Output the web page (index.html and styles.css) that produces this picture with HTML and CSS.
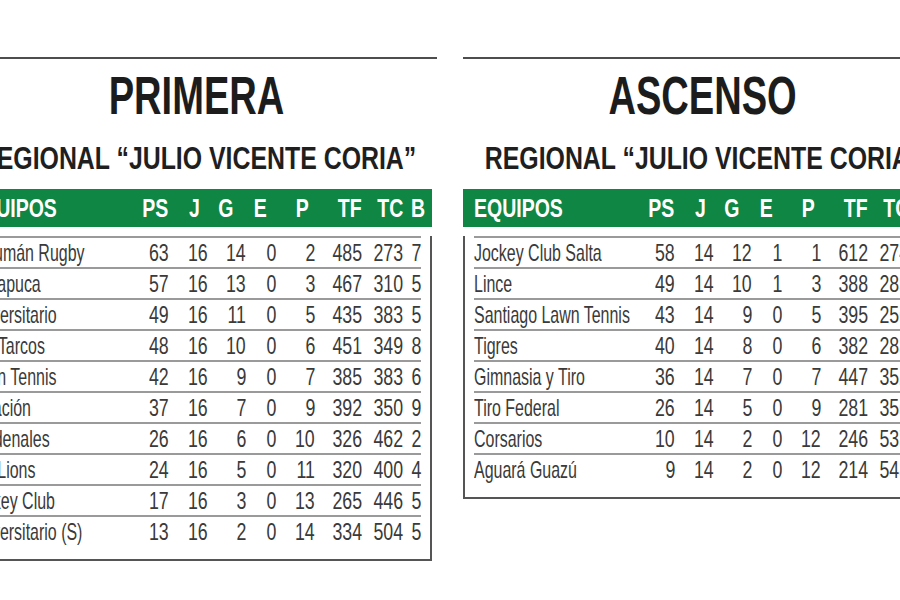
FILE: index.html
```html
<!DOCTYPE html>
<html lang="es">
<head>
<meta charset="utf-8">
<title>Posiciones</title>
<link rel="stylesheet" href="styles.css">
</head>
<body>
<div class="page">
  <section class="panel">
    <div class="rule"></div>
    <h1 class="title"><span>PRIMERA</span></h1>
    <h2 class="sub"><span>REGIONAL “JULIO VICENTE CORIA”</span></h2>
    <div class="thead">
      <span class="h-team"><b>EQUIPOS</b></span><span class="h-ps"><b>PS</b></span><span class="h-j"><b>J</b></span><span class="h-g"><b>G</b></span><span class="h-e"><b>E</b></span><span class="h-p"><b>P</b></span><span class="h-tf"><b>TF</b></span><span class="h-tc"><b>TC</b></span><span class="h-b"><b>B</b></span>
    </div>
    <div class="box">
      <div class="row"><span class="team"><i>Tucumán Rugby</i></span><span><i>63</i></span><span><i>16</i></span><span><i>14</i></span><span><i>0</i></span><span><i>2</i></span><span><i>485</i></span><span><i>273</i></span><span><i>7</i></span></div>
      <div class="row"><span class="team"><i>Huirapuca</i></span><span><i>57</i></span><span><i>16</i></span><span><i>13</i></span><span><i>0</i></span><span><i>3</i></span><span><i>467</i></span><span><i>310</i></span><span><i>5</i></span></div>
      <div class="row"><span class="team"><i>Universitario</i></span><span><i>49</i></span><span><i>16</i></span><span><i>11</i></span><span><i>0</i></span><span><i>5</i></span><span><i>435</i></span><span><i>383</i></span><span><i>5</i></span></div>
      <div class="row"><span class="team"><i>Los Tarcos</i></span><span><i>48</i></span><span><i>16</i></span><span><i>10</i></span><span><i>0</i></span><span><i>6</i></span><span><i>451</i></span><span><i>349</i></span><span><i>8</i></span></div>
      <div class="row"><span class="team"><i>Lawn Tennis</i></span><span><i>42</i></span><span><i>16</i></span><span><i>9</i></span><span><i>0</i></span><span><i>7</i></span><span><i>385</i></span><span><i>383</i></span><span><i>6</i></span></div>
      <div class="row"><span class="team"><i>Natación</i></span><span><i>37</i></span><span><i>16</i></span><span><i>7</i></span><span><i>0</i></span><span><i>9</i></span><span><i>392</i></span><span><i>350</i></span><span><i>9</i></span></div>
      <div class="row"><span class="team"><i>Cardenales</i></span><span><i>26</i></span><span><i>16</i></span><span><i>6</i></span><span><i>0</i></span><span><i>10</i></span><span><i>326</i></span><span><i>462</i></span><span><i>2</i></span></div>
      <div class="row"><span class="team"><i>Old Lions</i></span><span><i>24</i></span><span><i>16</i></span><span><i>5</i></span><span><i>0</i></span><span><i>11</i></span><span><i>320</i></span><span><i>400</i></span><span><i>4</i></span></div>
      <div class="row"><span class="team"><i>Jockey Club</i></span><span><i>17</i></span><span><i>16</i></span><span><i>3</i></span><span><i>0</i></span><span><i>13</i></span><span><i>265</i></span><span><i>446</i></span><span><i>5</i></span></div>
      <div class="row"><span class="team"><i>Universitario (S)</i></span><span><i>13</i></span><span><i>16</i></span><span><i>2</i></span><span><i>0</i></span><span><i>14</i></span><span><i>334</i></span><span><i>504</i></span><span><i>5</i></span></div>
    </div>
  </section>
  <section class="panel">
    <div class="rule"></div>
    <h1 class="title"><span>ASCENSO</span></h1>
    <h2 class="sub"><span>REGIONAL “JULIO VICENTE CORIA”</span></h2>
    <div class="thead">
      <span class="h-team"><b>EQUIPOS</b></span><span class="h-ps"><b>PS</b></span><span class="h-j"><b>J</b></span><span class="h-g"><b>G</b></span><span class="h-e"><b>E</b></span><span class="h-p"><b>P</b></span><span class="h-tf"><b>TF</b></span><span class="h-tc"><b>TC</b></span><span class="h-b"><b>B</b></span>
    </div>
    <div class="box">
      <div class="row"><span class="team"><i>Jockey Club Salta</i></span><span><i>58</i></span><span><i>14</i></span><span><i>12</i></span><span><i>1</i></span><span><i>1</i></span><span><i>612</i></span><span><i>274</i></span><span><i>6</i></span></div>
      <div class="row"><span class="team"><i>Lince</i></span><span><i>49</i></span><span><i>14</i></span><span><i>10</i></span><span><i>1</i></span><span><i>3</i></span><span><i>388</i></span><span><i>285</i></span><span><i>5</i></span></div>
      <div class="row"><span class="team"><i>Santiago Lawn Tennis</i></span><span><i>43</i></span><span><i>14</i></span><span><i>9</i></span><span><i>0</i></span><span><i>5</i></span><span><i>395</i></span><span><i>256</i></span><span><i>7</i></span></div>
      <div class="row"><span class="team"><i>Tigres</i></span><span><i>40</i></span><span><i>14</i></span><span><i>8</i></span><span><i>0</i></span><span><i>6</i></span><span><i>382</i></span><span><i>283</i></span><span><i>6</i></span></div>
      <div class="row"><span class="team"><i>Gimnasia y Tiro</i></span><span><i>36</i></span><span><i>14</i></span><span><i>7</i></span><span><i>0</i></span><span><i>7</i></span><span><i>447</i></span><span><i>352</i></span><span><i>8</i></span></div>
      <div class="row"><span class="team"><i>Tiro Federal</i></span><span><i>26</i></span><span><i>14</i></span><span><i>5</i></span><span><i>0</i></span><span><i>9</i></span><span><i>281</i></span><span><i>356</i></span><span><i>6</i></span></div>
      <div class="row"><span class="team"><i>Corsarios</i></span><span><i>10</i></span><span><i>14</i></span><span><i>2</i></span><span><i>0</i></span><span><i>12</i></span><span><i>246</i></span><span><i>537</i></span><span><i>2</i></span></div>
      <div class="row"><span class="team"><i>Aguará Guazú</i></span><span><i>9</i></span><span><i>14</i></span><span><i>2</i></span><span><i>0</i></span><span><i>12</i></span><span><i>214</i></span><span><i>548</i></span><span><i>1</i></span></div>
    </div>
  </section>
</div>
</body>
</html>
```
FILE: styles.css
```css
html, body {
  margin: 0;
  padding: 0;
  background: #ffffff;
  overflow: hidden;
}

.page {
  display: flex;
  gap: 26px;
  margin-left: -43px;
  width: 986px;
}

.panel {
  flex: none;
  width: 480px;
  font-family: "Liberation Sans", Arial, sans-serif;
}

.rule {
  height: 2px;
  margin-top: 57px;
  background: #4d4d4d;
}

.title,
.sub {
  display: flex;
  justify-content: center;
  font-weight: 700;
  white-space: nowrap;
}

.title {
  margin: 9px 0 0;
  font-size: 54px;
  line-height: 54px;
  color: #1c1c1c;
}

.title span {
  flex: none;
  transform: scaleX(0.705);
}

.sub {
  margin: 20px 0 0;
  font-size: 32px;
  line-height: 32px;
  color: #1f1f1f;
}

.sub span {
  flex: none;
  transform: scaleX(0.777);
}

.thead,
.row {
  display: grid;
  grid-template-columns: 171px 30px 39px 38px 30px 39px 47px 41px 18px;
}

.thead {
  box-sizing: border-box;
  width: 475px;
  height: 38px;
  margin-top: 15px;
  padding: 0 11px;
  background: #0f8644;
  color: #ffffff;
  font-size: 25px;
  line-height: 38px;
  white-space: nowrap;
}

.thead span {
  justify-self: end;
}

.thead b {
  display: inline-block;
  font-weight: 700;
  transform: scaleX(0.78);
  transform-origin: right center;
}

.thead .h-team { justify-self: start; }
.thead .h-team b { transform-origin: left center; }
.thead .h-ps { margin-right: 1px; }
.thead .h-j { margin-right: 8px; }
.thead .h-g { margin-right: 13px; }
.thead .h-e { margin-right: 9px; }
.thead .h-p { margin-right: 6px; }
.thead .h-b { margin-right: -4px; }

.box {
  box-sizing: border-box;
  width: 475px;
  margin-top: 9px;
  padding: 0 9px 13px;
  border: 2px solid #555555;
  border-top: none;
}

.row {
  box-sizing: border-box;
  height: 31px;
  padding-top: 1px;
  border-top: 2px solid #9a9a9a;
  font-size: 24px;
  line-height: 28px;
  color: #3a3a3a;
  white-space: nowrap;
}

.row > span {
  justify-self: end;
}

.row i {
  display: inline-block;
  font-style: normal;
  transform: scaleX(0.74);
  transform-origin: right center;
}

.row > .team {
  justify-self: start;
}

.row > .team i {
  transform: scaleX(0.665);
  transform-origin: left center;
}
```
